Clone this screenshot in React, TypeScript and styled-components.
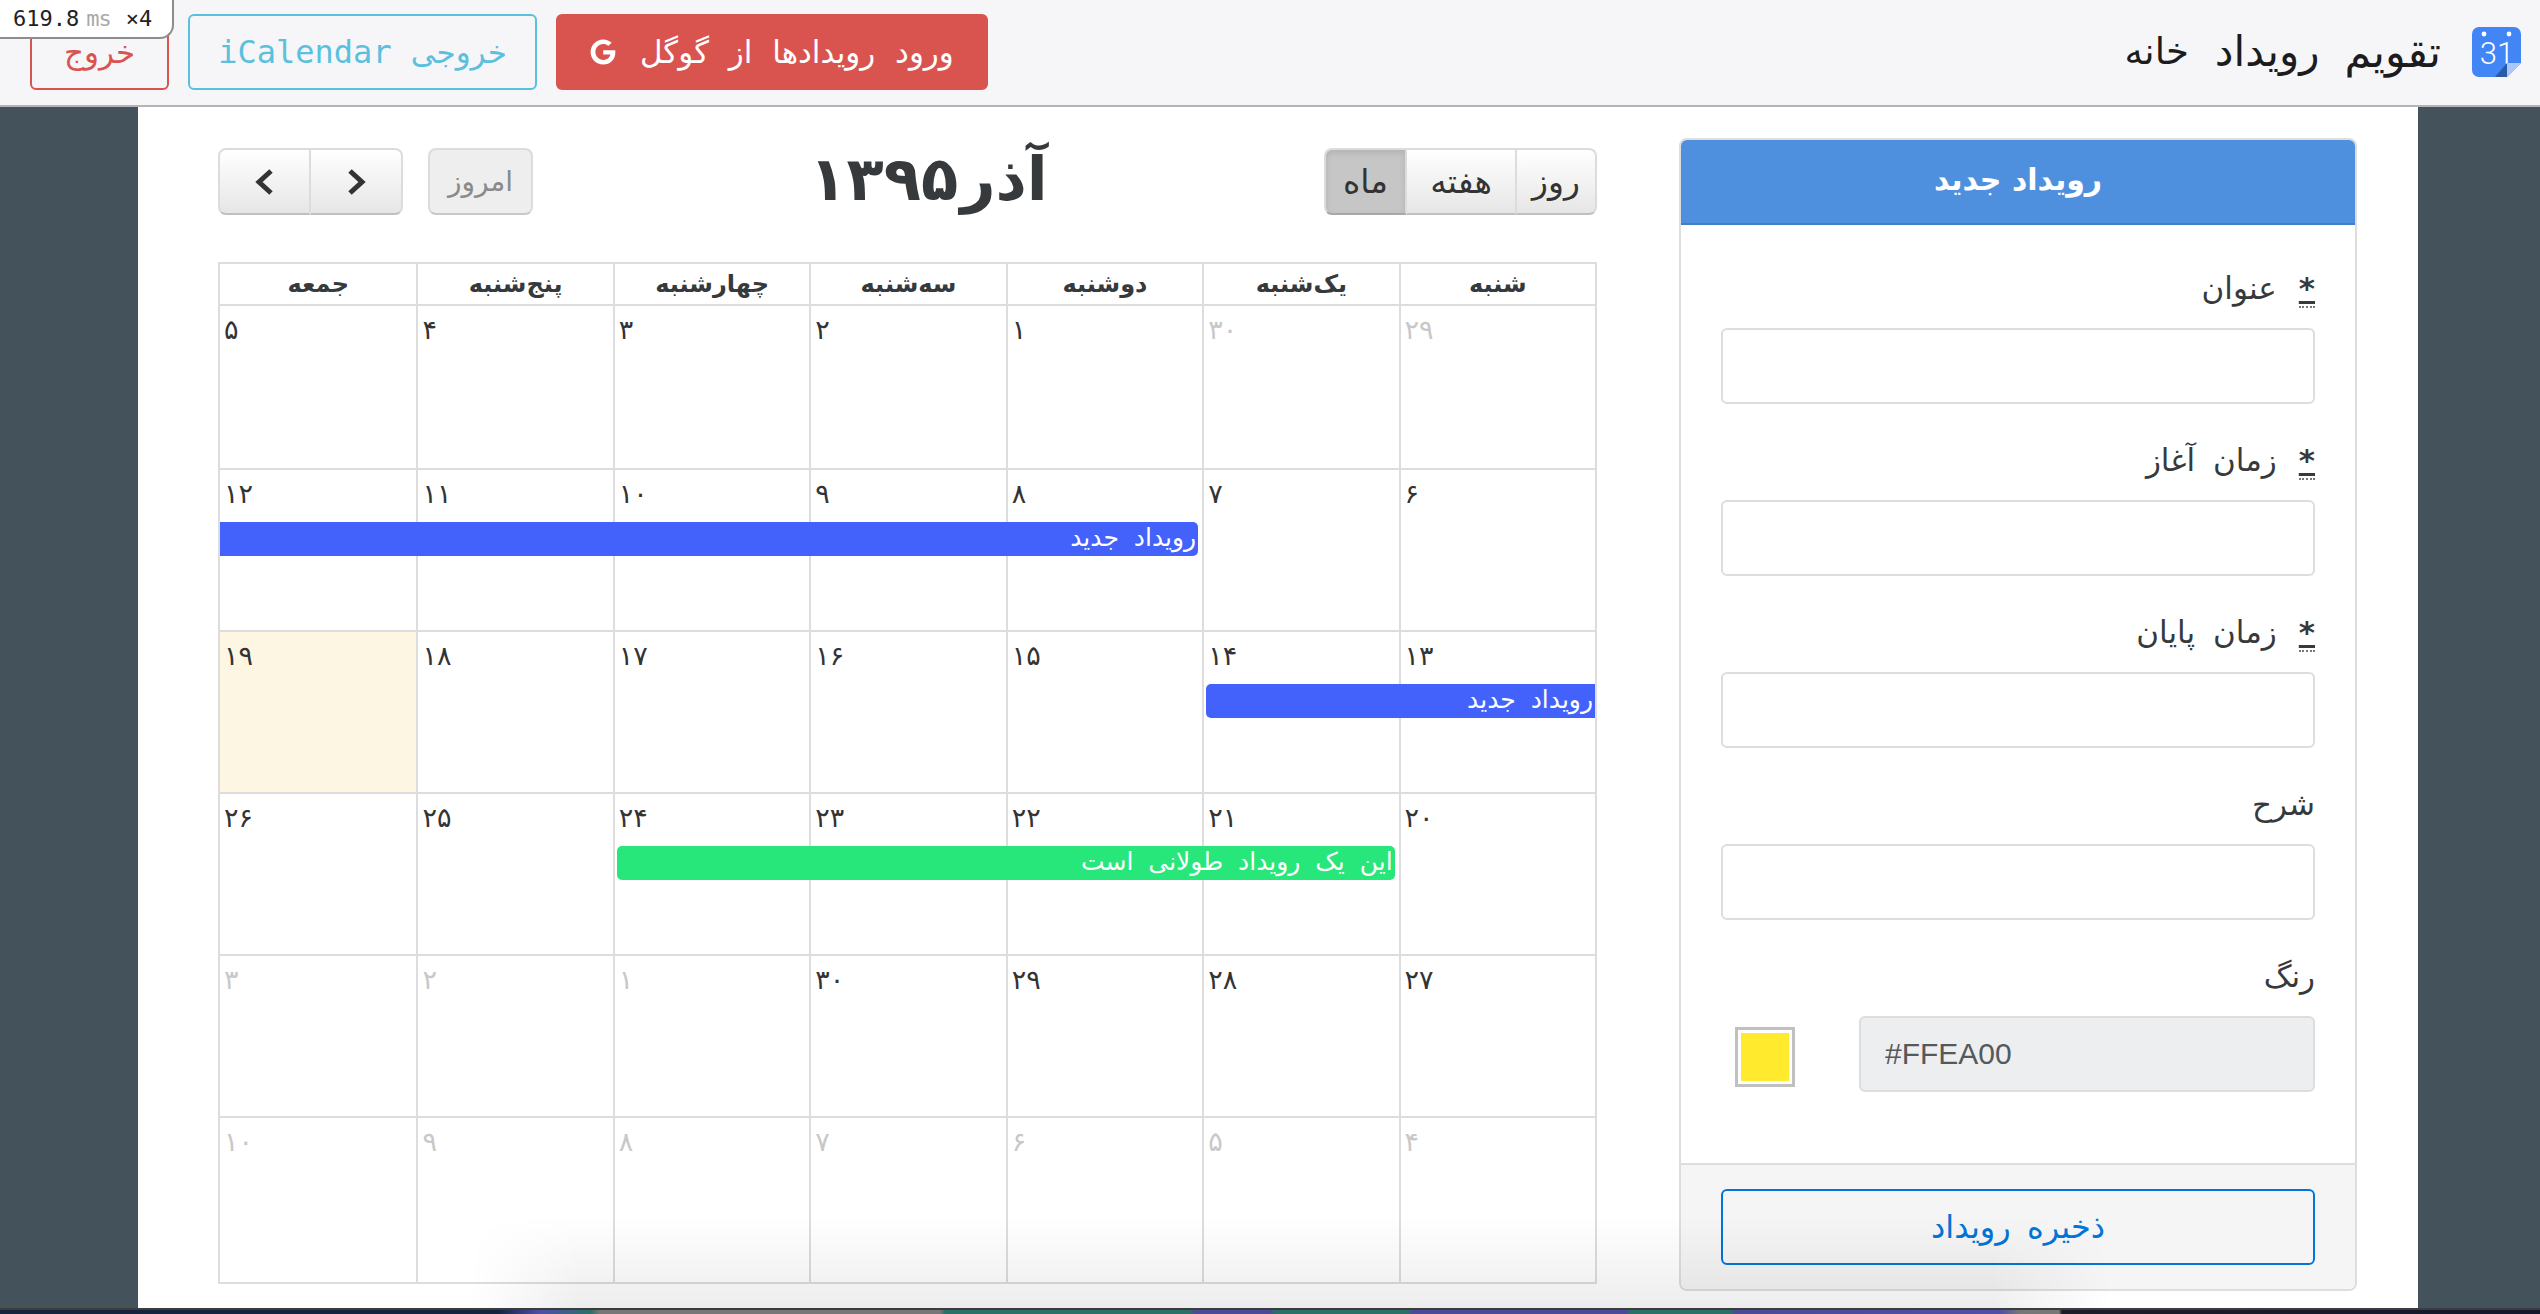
import styled, { createGlobalStyle } from "styled-components"
import { FaGoogle } from "react-icons/fa"

const GlobalStyle = createGlobalStyle`
  html, body {
    margin: 0;
    padding: 0;
    background: #44525c;
  }
  * {
    box-sizing: border-box;
  }
`

const persian = "\"DejaVu Sans\", \"Noto Sans\", sans-serif"

const Page = styled.div`
  position: relative;
  width: 2540px;
  height: 1314px;
  overflow: hidden;
  display: flex;
  flex-direction: column;
  font-family: ${persian};
  color: #373a3c;
`

const Navbar = styled.nav`
  height: 107px;
  flex: none;
  display: flex;
  align-items: center;
  padding: 0 19px 2px 30px;
  background: #f6f6f9;
  border-bottom: 2px solid #b4b4b4;
  position: relative;
  z-index: 1;
`

const Logo = styled.svg`
  width: 49px;
  height: 50px;
  flex: none;
`

const Brand = styled.a`
  font-size: 43px;
  color: #1c1c1c;
  margin-right: 31px;
`

const NavLink = styled.a`
  font-size: 42px;
  color: #1c1c1c;
  margin-right: 25px;

  & + & {
    font-size: 37px;
    margin-right: 26px;
  }
`

const NavActions = styled.div`
  margin-right: auto;
  display: flex;
  gap: 19px;
`

const ActionButton = styled.button<{ $tone: "solid" | "info" | "danger" }>`
  height: 76px;
  padding: 0 ${({ $tone }) => ($tone === "info" ? 28 : 32)}px;
  display: flex;
  align-items: center;
  gap: ${({ $tone }) => ($tone === "info" ? 19 : 24)}px;
  border-radius: 6px;
  font-family: ${persian};
  font-size: 31px;
  word-spacing: ${({ $tone }) => ($tone === "solid" ? 10 : 6)}px;
  border: 2px solid
    ${({ $tone }) => ($tone === "info" ? "#5bc0de" : "#d9534f")};
  background: ${({ $tone }) => ($tone === "solid" ? "#d9534f" : "transparent")};
  color: ${({ $tone }) =>
    $tone === "solid" ? "#fff" : $tone === "info" ? "#5bc0de" : "#d9534f"};
`

const Mono = styled.span`
  font-family: "DejaVu Sans Mono", monospace;
  font-size: 32px;
`

const DebugBadge = styled.div`
  position: absolute;
  top: 0;
  left: 0;
  z-index: 3;
  width: 174px;
  height: 39px;
  padding-left: 13px;
  display: flex;
  align-items: center;
  gap: 7px;
  direction: ltr;
  background: #fff;
  border-right: 2px solid #8d8d8d;
  border-bottom: 2px solid #8d8d8d;
  border-bottom-right-radius: 14px;
  font-family: "DejaVu Sans Mono", monospace;
  font-size: 22px;
  color: #222;
`

const DebugUnit = styled.span`
  color: #a8a8a8;
  margin-right: 8px;
  letter-spacing: -1px;
`

const Main = styled.main`
  flex: 1;
  min-height: 0;
  padding: 0 122px 0 138px;
  background: #44525c;
`

const Content = styled.div`
  height: 100%;
  display: flex;
  gap: 82px;
  padding: 31px 61px 0 81px;
  background: #fff;
`

const Panel = styled.section`
  width: 678px;
  height: 1153px;
  flex: none;
  display: flex;
  flex-direction: column;
  border: 2px solid #ddd;
  border-radius: 8px;
  overflow: hidden;
`

const PanelHeader = styled.h2`
  margin: 0;
  height: 85px;
  flex: none;
  padding-bottom: 4px;
  display: flex;
  align-items: center;
  justify-content: center;
  background: #4f90de;
  border-bottom: 2px solid #437fc8;
  color: #fff;
  font-size: 30px;
  font-weight: 700;
`

const PanelBody = styled.div`
  flex: 1;
  padding: 35px 40px 0;
`

const Field = styled.div`
  margin-bottom: 28px;
`

const Label = styled.label`
  height: 68px;
  display: block;
  font-size: 31px;
  line-height: 56px;
  word-spacing: 8px;
  color: #373a3c;
`

const Required = styled.abbr`
  font-weight: 700;
  margin-left: 22px;
  text-decoration: underline;
  border-bottom: 2px dotted #777;
`

const TextInput = styled.input`
  display: block;
  width: 100%;
  height: 76px;
  padding: 0 24px;
  border: 2px solid #ddd;
  border-radius: 6px;
  background: ${({ readOnly }) => (readOnly ? "#eceeef" : "#fff")};
  color: #55595c;
  font-family: "Liberation Sans", sans-serif;
  font-size: 30px;
  direction: ltr;
`

const ColorRow = styled.div`
  display: flex;
  align-items: center;
  justify-content: space-between;
`

const ColorInput = styled.div`
  width: 456px;
`

const Swatch = styled.div<{ $color: string }>`
  width: 60px;
  height: 60px;
  margin: 5px 0 0 14px;
  border: 3px solid #c0c0c0;
  padding: 3px;
  background: #fff;

  &::after {
    content: "";
    display: block;
    height: 100%;
    background: ${({ $color }) => $color};
  }
`

const PanelFooter = styled.div`
  height: 126px;
  flex: none;
  padding: 24px 40px;
  background: #f5f5f5;
  border-top: 2px solid #ddd;
`

const SaveButton = styled.button`
  width: 100%;
  height: 76px;
  border: 2px solid #0275d8;
  border-radius: 6px;
  background: transparent;
  color: #0275d8;
  font-family: ${persian};
  font-size: 32px;
  word-spacing: 6px;
`

const Calendar = styled.section`
  flex: 1;
  padding-top: 10px;
`

const Toolbar = styled.div`
  height: 67px;
  margin-bottom: 47px;
  display: flex;
  align-items: center;
  justify-content: space-between;
`

const ButtonGroup = styled.div`
  display: flex;
  gap: 25px;
`

const Segmented = styled.div`
  display: flex;
`

const CalButton = styled.button<{ $width: number; $active?: boolean }>`
  width: ${({ $width }) => $width}px;
  height: 67px;
  padding: 0;
  display: flex;
  align-items: center;
  justify-content: center;
  font-family: ${persian};
  font-size: 33px;
  color: #333;
  border: 2px solid #dcdcdc;
  border-bottom-color: ${({ $active }) => ($active ? "#a8a8a8" : "#c0c0c0")};
  border-left-width: 0;
  background: ${({ $active }) =>
    $active ? "#c6c6c6" : "linear-gradient(#ffffff, #e6e6e6)"};
  box-shadow: ${({ $active }) =>
    $active ? "inset 0 3px 6px rgba(0, 0, 0, 0.1)" : "none"};

  ${Segmented} > &:first-child {
    border-radius: 0 8px 8px 0;
  }
  ${Segmented} > &:last-child {
    border-radius: 8px 0 0 8px;
    border-left-width: 2px;
  }
`

const TodayButton = styled.button`
  width: 105px;
  height: 67px;
  padding: 0;
  font-family: ${persian};
  font-size: 28px;
  color: #8a8a8a;
  background: #eeeeee;
  border: 2px solid #dcdcdc;
  border-bottom-color: #c8c8c8;
  border-radius: 8px;
`

const Chevron = styled.svg`
  width: 22px;
  height: 28px;
`

const Title = styled.h1`
  margin: -6px 0 0;
  font-size: 61px;
  font-weight: 700;
  line-height: 1;
  word-spacing: -19px;
  color: #373a3c;
`

const Grid = styled.div`
  width: 1379px;
  border: 2px solid #ddd;
`

const HeadRow = styled.div`
  height: 42px;
  display: grid;
  grid-template-columns: repeat(7, 1fr);
  border-bottom: 2px solid #ddd;
`

const HeadCell = styled.div`
  display: flex;
  align-items: center;
  justify-content: center;
  font-size: 24px;
  font-weight: 700;
  border-left: 2px solid #ddd;

  &:last-child {
    border-left: 0;
  }
`

const Week = styled.div<{ $height: number }>`
  height: ${({ $height }) => $height}px;
  display: grid;
  grid-template-columns: repeat(7, 1fr);
  grid-template-rows: 100%;
  border-bottom: 2px solid #ddd;

  &:last-child {
    border-bottom: 0;
  }
`

const Day = styled.div<{ $column: number; $muted?: boolean; $today?: boolean }>`
  grid-row: 1;
  grid-column: ${({ $column }) => $column};
  padding: 9px 0 0 4px;
  text-align: left;
  direction: ltr;
  font-size: 27px;
  line-height: 30px;
  letter-spacing: -2px;
  color: ${({ $muted }) => ($muted ? "#c8c8c8" : "#333")};
  background: ${({ $today }) => ($today ? "#fcf6e3" : "transparent")};
  border-left: 2px solid #ddd;

  &:nth-child(7) {
    border-left: 0;
  }
`

const Event = styled.div<{
  $from: number
  $to: number
  $color: string
  $roundRight?: boolean
  $roundLeft?: boolean
}>`
  grid-row: 1;
  grid-column: ${({ $from, $to }) => `${$from} / ${$to + 1}`};
  align-self: start;
  z-index: 1;
  height: 34px;
  margin-top: 52px;
  margin-right: ${({ $roundRight }) => ($roundRight ? "4px" : "0")};
  margin-left: ${({ $roundLeft }) => ($roundLeft ? "4px" : "0")};
  padding-right: 2px;
  background: ${({ $color }) => $color};
  border-radius: ${({ $roundLeft, $roundRight }) => {
    const left = $roundLeft ? "5px" : "0"
    const right = $roundRight ? "5px" : "0"
    return `${left} ${right} ${right} ${left}`
  }};
  color: #fff;
  font-size: 25px;
  line-height: 32px;
  word-spacing: 7px;
  white-space: nowrap;
`

const DockGlow = styled.div`
  position: absolute;
  left: 470px;
  bottom: 6px;
  z-index: 2;
  width: 1640px;
  height: 92px;
  pointer-events: none;
  background: linear-gradient(to top, rgba(0, 0, 0, 0.07), rgba(0, 0, 0, 0));
  mask-image: linear-gradient(
    to right,
    transparent,
    black 110px,
    black 1520px,
    transparent
  );
`

const DesktopStrip = styled.div`
  height: 6px;
  flex: none;
  border-top: 2px solid #3c3c3c;
  background: linear-gradient(
    to right,
    #14243f 0,
    #14243f 498px,
    #4f4fa8 540px,
    #2a7068 590px,
    #777 600px,
    #777 940px,
    #2a7068 945px,
    #2a7068 1190px,
    #4a4a98 1195px,
    #4a4a98 1270px,
    #2a7068 1275px,
    #2a7068 1408px,
    #4a4a98 1412px,
    #4a4a98 1626px,
    #2a7068 1630px,
    #2a7068 1731px,
    #4a4a98 1735px,
    #4f4fa8 1999px,
    #777 2020px,
    #777 2059px,
    #1c1c28 2062px,
    #14192e 100%
  );
`

const DAYS = ["شنبه", "یک‌شنبه", "دوشنبه", "سه‌شنبه", "چهارشنبه", "پنج‌شنبه", "جمعه"]

const toPersian = (n: number) =>
  String(n).replace(/\d/g, (d) => "۰۱۲۳۴۵۶۷۸۹"[Number(d)])

type WeekData = {
  height: number
  days: number[]
  mutedFrom?: number
  mutedTo?: number
  event?: { from: number; to: number; color: string; title: string; roundRight?: boolean; roundLeft?: boolean }
}

const WEEKS: WeekData[] = [
  { height: 164, days: [29, 30, 1, 2, 3, 4, 5], mutedFrom: 0, mutedTo: 1 },
  {
    height: 162,
    days: [6, 7, 8, 9, 10, 11, 12],
    event: { from: 3, to: 7, color: "#4262fb", title: "رویداد جدید", roundRight: true },
  },
  {
    height: 162,
    days: [13, 14, 15, 16, 17, 18, 19],
    event: { from: 1, to: 2, color: "#4262fb", title: "رویداد جدید", roundLeft: true },
  },
  {
    height: 162,
    days: [20, 21, 22, 23, 24, 25, 26],
    event: { from: 2, to: 5, color: "#27e67a", title: "این یک رویداد طولانی است", roundRight: true, roundLeft: true },
  },
  { height: 162, days: [27, 28, 29, 30, 1, 2, 3], mutedFrom: 4, mutedTo: 6 },
  { height: 164, days: [4, 5, 6, 7, 8, 9, 10], mutedFrom: 0, mutedTo: 6 },
]

const FIELDS = [
  { label: "عنوان", required: true },
  { label: "زمان آغاز", required: true },
  { label: "زمان پایان", required: true },
  { label: "شرح", required: false },
]

export default function App() {
  return (
    <Page dir="rtl">
      <GlobalStyle />
      <DebugBadge>
        619.8<DebugUnit>ms</DebugUnit>×4
      </DebugBadge>
      <Navbar>
        <Logo viewBox="0 0 49 50">
          <path d="M7 0h35a7 7 0 0 1 7 7v29L35 50H7a7 7 0 0 1-7-7V7a7 7 0 0 1 7-7z" fill="#4285f4" />
          <circle cx="12" cy="7" r="2.4" fill="#fff" />
          <circle cx="37" cy="7" r="2.4" fill="#fff" />
          <text x="25" y="37" textAnchor="middle" fontFamily="Roboto" fontWeight="300" fontSize="31" fill="#fff" direction="ltr">
            31
          </text>
          <path d="M49 36H35v14z" fill="#a9c7fb" />
          <path d="M35 36v14H23z" fill="#2a5aa8" />
        </Logo>
        <Brand>تقویم</Brand>
        <NavLink>رویداد</NavLink>
        <NavLink>خانه</NavLink>
        <NavActions>
          <ActionButton $tone="solid">
            ورود رویدادها از گوگل
            <FaGoogle size={26} />
          </ActionButton>
          <ActionButton $tone="info">
            خروجی <Mono>iCalendar</Mono>
          </ActionButton>
          <ActionButton $tone="danger">خروج</ActionButton>
        </NavActions>
      </Navbar>
      <Main>
        <Content>
          <Panel>
            <PanelHeader>رویداد جدید</PanelHeader>
            <PanelBody>
              {FIELDS.map((field) => (
                <Field key={field.label}>
                  <Label>
                    {field.required && <Required title="ضروری">*</Required>}
                    {field.label}
                  </Label>
                  <TextInput />
                </Field>
              ))}
              <Field>
                <Label>رنگ</Label>
                <ColorRow>
                  <ColorInput>
                    <TextInput readOnly value="#FFEA00" />
                  </ColorInput>
                  <Swatch $color="#ffea2e" />
                </ColorRow>
              </Field>
            </PanelBody>
            <PanelFooter>
              <SaveButton>ذخیره رویداد</SaveButton>
            </PanelFooter>
          </Panel>
          <Calendar>
            <Toolbar>
              <Segmented>
                <CalButton $width={80}>روز</CalButton>
                <CalButton $width={110}>هفته</CalButton>
                <CalButton $width={83} $active>
                  ماه
                </CalButton>
              </Segmented>
              <Title>آذر ۱۳۹۵</Title>
              <ButtonGroup>
                <TodayButton>امروز</TodayButton>
                <Segmented>
                  <CalButton $width={92}>
                    <Chevron viewBox="0 0 22 28">
                      <path d="M5 3l12 11L5 25" fill="none" stroke="#333" strokeWidth="5" />
                    </Chevron>
                  </CalButton>
                  <CalButton $width={93}>
                    <Chevron viewBox="0 0 22 28">
                      <path d="M17 3L5 14l12 11" fill="none" stroke="#333" strokeWidth="5" />
                    </Chevron>
                  </CalButton>
                </Segmented>
              </ButtonGroup>
            </Toolbar>
            <Grid>
              <HeadRow>
                {DAYS.map((day) => (
                  <HeadCell key={day}>{day}</HeadCell>
                ))}
              </HeadRow>
              {WEEKS.map((week) => (
                <Week key={week.days[0]} $height={week.height}>
                  {week.days.map((d, i) => (
                    <Day
                      key={i}
                      $column={i + 1}
                      $today={d === 19}
                      $muted={week.mutedFrom !== undefined && i >= week.mutedFrom && i <= (week.mutedTo ?? 6)}
                    >
                      {toPersian(d)}
                    </Day>
                  ))}
                  {week.event && (
                    <Event
                      $from={week.event.from}
                      $to={week.event.to}
                      $color={week.event.color}
                      $roundRight={week.event.roundRight}
                      $roundLeft={week.event.roundLeft}
                    >
                      {week.event.title}
                    </Event>
                  )}
                </Week>
              ))}
            </Grid>
          </Calendar>
        </Content>
      </Main>
      <DesktopStrip />
      <DockGlow />
    </Page>
  )
}
